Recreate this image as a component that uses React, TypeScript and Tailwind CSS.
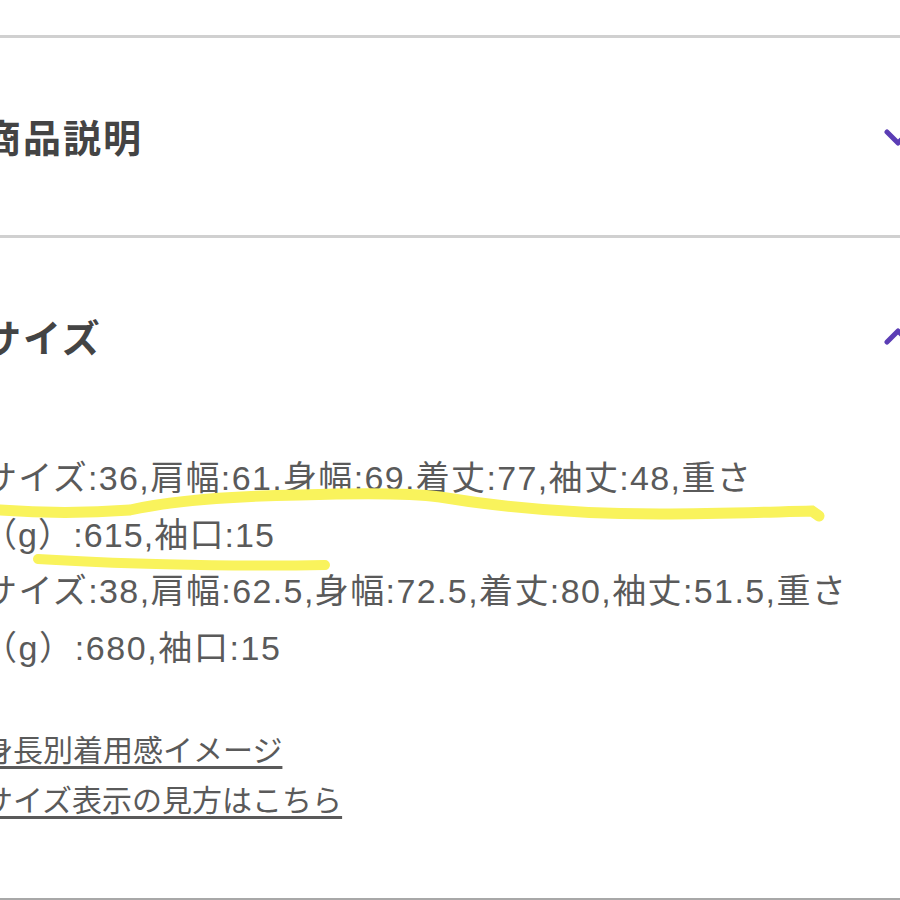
import React from 'react';

const FONT = "font-['Liberation_Sans','Noto_Sans_CJK_JP',sans-serif]";

function Chevron({ up }: { up?: boolean }) {
  return (
    <svg width="40" height="20" viewBox="0 0 40 20" fill="none" className="shrink-0 mr-[-24px]">
      <path
        d={up ? 'M3 15 L14 4 L25 15' : 'M3 5 L14 16 L25 5'}
        stroke="#5b3db5"
        strokeWidth="5"
        strokeLinecap="round"
        strokeLinejoin="round"
      />
    </svg>
  );
}

function SectionHeader({ title, up }: { title: string; up?: boolean }) {
  return (
    <div className="h-[200px] flex items-center justify-between border-t-[3px] border-[#d0d0d0]">
      <h2 className="ml-[-17px] pt-[6px] text-[38px] font-bold text-[#444444] tracking-[2px]">{title}</h2>
      <Chevron up={up} />
    </div>
  );
}

export default function App() {
  return (
    <div className={`relative w-[900px] h-[900px] overflow-hidden bg-white ${FONT} flex flex-col`}>
      <div className="h-[35px]"></div>
      <SectionHeader title="商品説明" />
      <SectionHeader title="サイズ" up />

      <div className="ml-[-17px] pt-[15px] flex-1 text-[#5a5a5a]">
        <div className="text-[34px] leading-[56.5px] whitespace-nowrap">
          <p className="tracking-[1.35px]">サイズ:36,肩幅:61,身幅:69,着丈:77,袖丈:48,重さ</p>
          <p className="tracking-[1.1px]">（g）:615,袖口:15</p>
          <p className="tracking-[1.4px]">サイズ:38,肩幅:62.5,身幅:72.5,着丈:80,袖丈:51.5,重さ</p>
          <p className="tracking-[1.6px]">（g）:680,袖口:15</p>
        </div>
        <div className="mt-[50px] text-[30px] leading-[50px] whitespace-nowrap">
          <p><a className="underline underline-offset-[5px] decoration-[3px]">身長別着用感イメージ</a></p>
          <p><a className="underline underline-offset-[5px] decoration-[3px]">サイズ表示の見方はこちら</a></p>
        </div>
      </div>
      <div className="h-[2px] bg-[#a8a8a8]"></div>

      {/* marker strokes over the text */}
      <svg width="900" height="900" viewBox="0 0 900 900" fill="none" className="absolute left-0 top-0 pointer-events-none">
        <path
          d="M0 510 C40 513 90 513 130 510 C175 500 240 496 300 495 C360 493 410 493 440 497 C500 507 580 514 660 514 C720 514 770 512 812 511 L819 516"
          stroke="#f9f35c"
          strokeWidth="11"
          strokeLinecap="round"
        />
        <path
          d="M38 559 C100 563 220 567 325 565"
          stroke="#f9f35c"
          strokeWidth="10"
          strokeLinecap="round"
        />
      </svg>
    </div>
  );
}
